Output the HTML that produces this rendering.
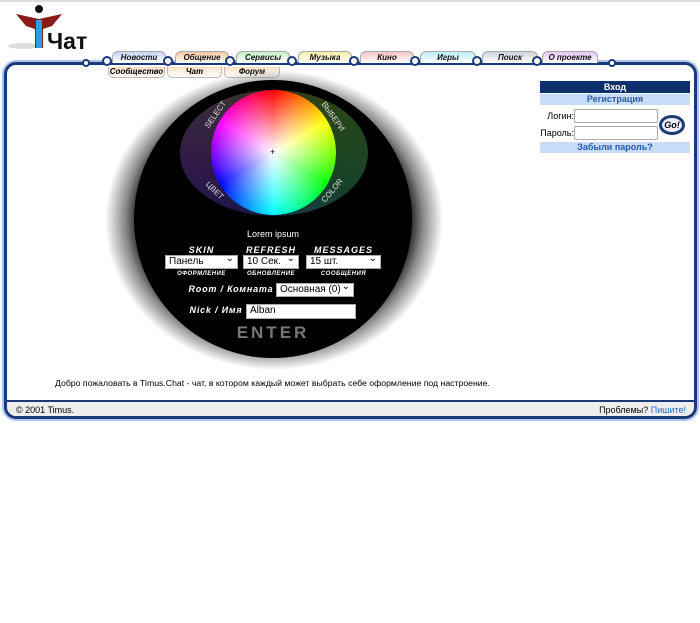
<!DOCTYPE html>
<html><head><meta charset="utf-8"><style>
*{margin:0;padding:0;box-sizing:border-box}
body{width:700px;height:623px;background:#fff;position:relative;overflow:hidden;font-family:"Liberation Sans","Noto Sans CJK SC",sans-serif;font-size:9px;color:#000}
.a{position:absolute;white-space:nowrap}
.topline{left:0;top:0;width:700px;height:2px;background:#ddd}
.frame{left:4px;top:62px;width:693px;height:357px;border:3px solid #1b3a78;border-radius:12px;box-shadow:0 0 0 2px #a9c4ee}
.foot{left:7px;top:400px;width:687px;height:16px;background:#eee;border-top:2px solid #1b3a78;border-radius:0 0 10px 10px}
.tab{height:12px;border:1px solid #aaa;border-bottom:none;border-radius:6px 6px 0 0;font:italic bold 8px "Liberation Sans",sans-serif;text-align:center;line-height:11px;color:#111}
.sub{height:11px;border:1px solid #bbb;border-top:none;border-radius:0 0 5px 5px;font:italic bold 8px "Liberation Sans",sans-serif;text-align:center;line-height:10px;background:linear-gradient(#fde0c8,#fff)}
.node{width:10px;height:10px;border-radius:50%;border:2px solid #1b3a78;background:#fff}
.sel{background:#fff;border:1px solid #aaa;height:14px;font-size:10px;line-height:12px;padding-left:3px;color:#000}
.dd:after{content:"⌄";position:absolute;right:3px;top:-3px;font-size:10px}
.lab{color:#fff;font:italic bold 9px "Liberation Sans",sans-serif;letter-spacing:1px;text-align:center}
.sl{color:#fff;font:italic bold 6px "Liberation Sans",sans-serif;letter-spacing:.5px;text-align:center}
</style></head><body>
<div class="a topline"></div>
<svg class="a" style="left:6px;top:4px" width="92" height="48" viewBox="0 0 92 48">
<ellipse cx="18" cy="42" rx="16" ry="3" fill="#ddd"/>
<circle cx="33" cy="5" r="4" fill="#111"/>
<path d="M10 10 L33 15 L56 10 L46 22 L37 25 L37 44 L29 44 L29 25 L20 22Z" fill="#8a1a1a"/>
<path d="M30 16 L36 16 L36 44 L30 44Z" fill="#2aa0e0"/>
<text x="41" y="45" font-family="Liberation Sans" font-weight="bold" font-size="23" fill="#111">Чат</text>
</svg>
<div class="a frame"></div>
<div class="a foot"></div>
<div class="a node" style="left:82px;top:59px;width:8px;height:8px"></div>
<div class="a node" style="left:608px;top:59px;width:8px;height:8px"></div>
<div class="a tab" style="left:112px;top:51px;width:54px;background:linear-gradient(#c6d6f8,#fff)">Новости</div>
<div class="a tab" style="left:175px;top:51px;width:54px;background:linear-gradient(#f8c8a0,#fff)">Общение</div>
<div class="a tab" style="left:236px;top:51px;width:54px;background:linear-gradient(#c4f0c4,#fff)">Сервисы</div>
<div class="a tab" style="left:298px;top:51px;width:54px;background:linear-gradient(#f8eea8,#fff)">Музыка</div>
<div class="a tab" style="left:360px;top:51px;width:54px;background:linear-gradient(#f8c4c4,#fff)">Кино</div>
<div class="a tab" style="left:420px;top:51px;width:56px;background:linear-gradient(#bdeef8,#fff)">Игры</div>
<div class="a tab" style="left:482px;top:51px;width:56px;background:linear-gradient(#ccd4de,#fff)">Поиск</div>
<div class="a tab" style="left:542px;top:51px;width:56px;background:linear-gradient(#e6c6f8,#fff)">О проекте</div>
<div class="a node" style="left:102px;top:56px"></div>
<div class="a node" style="left:163px;top:56px"></div>
<div class="a node" style="left:225px;top:56px"></div>
<div class="a node" style="left:287px;top:56px"></div>
<div class="a node" style="left:349px;top:56px"></div>
<div class="a node" style="left:410px;top:56px"></div>
<div class="a node" style="left:472px;top:56px"></div>
<div class="a node" style="left:532px;top:56px"></div>
<div class="a sub" style="left:108px;top:67px;width:57px">Сообщество</div>
<div class="a sub" style="left:167px;top:67px;width:55px">Чат</div>
<div class="a sub" style="left:224px;top:67px;width:56px">Форум</div>
<div class="a" style="left:105px;top:70px;width:338px;height:300px;border-radius:50%;background:radial-gradient(closest-side,#000 78%,#888 88%,rgba(255,255,255,0) 100%)"></div>
<div class="a" style="left:134px;top:80px;width:278px;height:278px;border-radius:50%;background:#000"></div>
<div class="a" style="left:180px;top:90px;width:188px;height:126px;border-radius:50%;background:conic-gradient(from 0deg,#4a4a20,#3a5a20,#205a30,#205050,#202060,#402060,#4a3a50,#4a4a20);opacity:.75"></div>
<div class="a" style="left:211px;top:90px;width:125px;height:125px;border-radius:50%;background:radial-gradient(closest-side,#fff,rgba(255,255,255,0)),conic-gradient(#f00,#ff0,#0f0,#0ff,#00f,#f0f,#f00)"></div>
<div class="a" style="left:270px;top:147px;color:#000;font-size:9px">+</div>
<div class="a" style="left:200px;top:110px;color:#ddd;font-size:8px;transform:rotate(-55deg)">SELECT</div>
<div class="a" style="left:316px;top:112px;color:#ddd;font-size:8px;transform:rotate(55deg)">ВЫБЕРИ</div>
<div class="a" style="left:204px;top:186px;color:#ddd;font-size:8px;transform:rotate(45deg)">ЦВЕТ</div>
<div class="a" style="left:318px;top:186px;color:#ddd;font-size:8px;transform:rotate(-50deg)">COLOR</div>
<div class="a" style="left:223px;top:229px;width:100px;text-align:center;color:#fff;font-size:9px">Lorem ipsum</div>
<div class="a lab" style="left:165px;top:245px;width:73px">SKIN</div>
<div class="a lab" style="left:243px;top:245px;width:56px">REFRESH</div>
<div class="a lab" style="left:306px;top:245px;width:75px">MESSAGES</div>
<div class="a sel dd" style="left:165px;top:255px;width:73px">Панель</div>
<div class="a sel dd" style="left:243px;top:255px;width:56px">10 Сек.</div>
<div class="a sel dd" style="left:306px;top:255px;width:75px">15 шт.</div>
<div class="a sl" style="left:165px;top:271px;width:73px">ОФОРМЛЕНИЕ</div>
<div class="a sl" style="left:243px;top:271px;width:56px">ОБНОВЛЕНИЕ</div>
<div class="a sl" style="left:306px;top:271px;width:75px">СООБЩЕНИЯ</div>
<div class="a lab" style="left:188px;top:284px;width:86px;letter-spacing:.8px">Room / Комната</div>
<div class="a sel dd" style="left:276px;top:283px;width:78px">Основная (0)</div>
<div class="a lab" style="left:188px;top:305px;width:56px;letter-spacing:.8px">Nick / Имя</div>
<div class="a sel" style="left:246px;top:304px;width:110px;height:15px">Alban</div>
<div class="a" style="left:223px;top:323px;width:100px;text-align:center;color:#777;font:bold 17px 'Liberation Sans',sans-serif;letter-spacing:3px">ENTER</div>
<div class="a" style="left:540px;top:81px;width:150px;height:12px;background:#0c2f6e;color:#fff;font-weight:bold;text-align:center;line-height:12px">Вход</div>
<div class="a" style="left:540px;top:94px;width:150px;height:11px;background:#c6dcf8;color:#2a5aa8;font-weight:bold;text-align:center;line-height:11px">Регистрация</div>
<div class="a" style="left:540px;top:111px;width:34px;text-align:right">Логин:</div>
<div class="a" style="left:540px;top:128px;width:34px;text-align:right">Пароль:</div>
<div class="a" style="left:574px;top:109px;width:84px;height:14px;border:1px solid #aaa;border-radius:2px"></div>
<div class="a" style="left:574px;top:126px;width:84px;height:14px;border:1px solid #aaa;border-radius:2px"></div>
<div class="a" style="left:659px;top:115px;width:26px;height:20px;border:3px solid #1b3a78;border-radius:50%;font:italic bold 9px 'Liberation Sans',sans-serif;text-align:center;line-height:14px;background:#eef">Go!</div>
<div class="a" style="left:540px;top:142px;width:150px;height:11px;background:#c6dcf8;color:#2a5aa8;font-weight:bold;text-align:center;line-height:11px">Забыли пароль?</div>
<div class="a" style="left:55px;top:378px;font-size:8.7px">Добро пожаловать в Timus.Chat - чат, в котором каждый может выбрать себе оформление под настроение.</div>
<div class="a" style="left:16px;top:405px">© 2001 Timus.</div>
<div class="a" style="left:560px;top:405px;width:126px;text-align:right">Проблемы? <span style="color:#2a6ac8">Пишите!</span></div>
</body></html>
